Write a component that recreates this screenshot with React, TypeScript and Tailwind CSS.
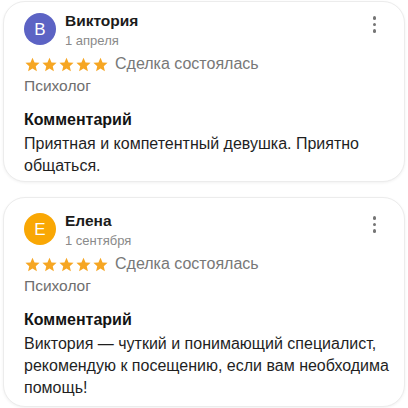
import React from "react";

type Review = {
  letter: string;
  color: string;
  name: string;
  date: string;
  role: string;
  text: string;
  pad: string;
};

const reviews: Review[] = [
  {
    letter: "В",
    color: "bg-[#5c63c4]",
    name: "Виктория",
    date: "1 апреля",
    role: "Психолог",
    text: "Приятная и компетентный девушка. Приятно общаться.",
    pad: "pt-[10px] pb-[4px]",
  },
  {
    letter: "Е",
    color: "bg-[#f9a704]",
    name: "Елена",
    date: "1 сентября",
    role: "Психолог",
    text: "Виктория — чуткий и понимающий специалист, рекомендую к посещению, если вам необходима помощь!",
    pad: "pt-[14px] pb-[7px]",
  },
];

const Star = () => (
  <svg width="17" height="17" viewBox="0 0 24 24" className="fill-[#f6a623]">
    <path d="M12 2.5l2.9 6.6 7.1.6-5.4 4.7 1.6 7-6.2-3.7-6.2 3.7 1.6-7L2 9.7l7.1-.6z" />
  </svg>
);

const Kebab = () => (
  <div className="flex flex-col gap-[3px] pt-[4px] mr-[23px]">
    <span className="block w-[3.5px] h-[3.5px] rounded-full bg-[#757575]" />
    <span className="block w-[3.5px] h-[3.5px] rounded-full bg-[#757575]" />
    <span className="block w-[3.5px] h-[3.5px] rounded-full bg-[#757575]" />
  </div>
);

const Card = ({ r }: { r: Review }) => {
  return (
    <div className={`rounded-[22px] border border-[#ececec] shadow-[0_1px_3px_rgba(0,0,0,0.06)] bg-white pl-[20px] pr-[5px] ${r.pad}`}>
      <div className="flex items-start justify-between">
        <div className="flex items-start">
          <div className={`mt-[1px] w-[32px] h-[32px] rounded-full ${r.color} flex items-center justify-center text-white text-[17px] leading-none`}>
            {r.letter}
          </div>
          <div className="ml-[9px] flex flex-col">
            <span className="text-[15.5px] leading-[18px] font-bold text-[#1b1b1b]">{r.name}</span>
            <span className="text-[13px] leading-[16px] text-[#8a8a8a] mt-[3px]">{r.date}</span>
          </div>
        </div>
        <Kebab />
      </div>
      <div className="flex items-center mt-[4px] h-[22px]">
        <div className="flex">
          <Star />
          <Star />
          <Star />
          <Star />
          <Star />
        </div>
        <span className="ml-[6px] text-[16px] leading-[22px] text-[#787878]">Сделка состоялась</span>
      </div>
      <div className="text-[15.5px] leading-[22px] text-[#6e6e6e]">{r.role}</div>
      <div className="mt-[12px] text-[16px] leading-[22px] font-bold text-[#141414]">Комментарий</div>
      <div className="mt-[2px] text-[16px] leading-[22px] text-[#1f1f1f]">{r.text}</div>
    </div>
  );
};

const App = () => {
  return (
    <div className="w-[408px] h-[408px] bg-white px-[3px] pt-[1px] flex flex-col gap-[15px] font-['Liberation_Sans',Arial,sans-serif] overflow-hidden">
      {reviews.map((r) => (
        <Card key={r.name} r={r} />
      ))}
    </div>
  );
};

export default App;
